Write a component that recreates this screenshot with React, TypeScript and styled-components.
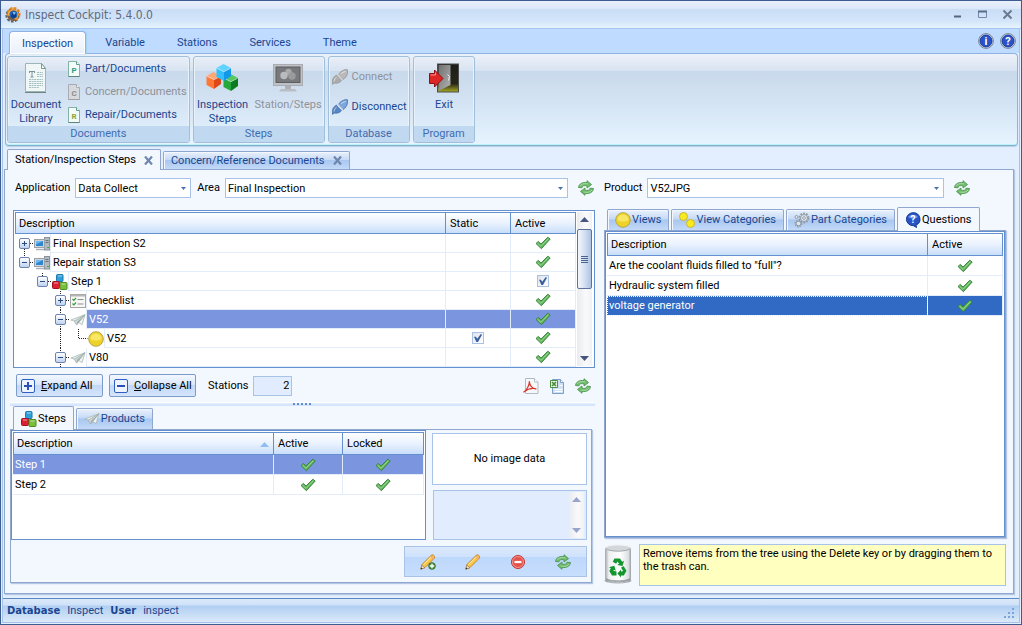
import React from 'react';
import styled, { createGlobalStyle, css } from 'styled-components';

const line = '#6490cf';
const softLine = '#a8c2e8';
const navy = '#1a4690';
const pageBg = '#f3f7fe';

const GlobalStyle = createGlobalStyle`
  * { box-sizing: border-box; }
  body { margin: 0; font: 11px/14px Roboto, "Liberation Sans", sans-serif; color: #000; }
  button, input, select, textarea { font: inherit; color: inherit; margin: 0; }
  button { border: 0; padding: 0; background: none; }
  svg { display: block; flex: none; }
`;

/* ---------- icons ---------- */

const AppIcon = () => (
  <svg width="16" height="16" viewBox="0 0 16 16">
    <circle cx="7.500" cy="8.500" r="5.800" fill="none" stroke="#5d6470" strokeWidth="2.600" strokeDasharray="2.600 1.300" />
    <circle cx="8.500" cy="7" r="5.600" fill="none" stroke="#e2851e" strokeWidth="2.800" strokeDasharray="2.600 1.100" />
    <circle cx="8" cy="7.600" r="5.400" fill="#f7a536" />
    <path d="M2.200 8.500a6 6 0 0 0 8 5l-1-2.500-4-2z" fill="#7d6047" />
    <circle cx="8.500" cy="7.500" r="3.900" fill="#1d62b8" />
    <path d="M8 4 11 6v4l-3 1.500L6 9.500z" fill="#0c3f8a" />
    <path d="M7.500 4.500l3.500 1.200L9 8z" fill="#8fc8ff" />
  </svg>
);

const RefreshIcon = () => (
  <svg width="16" height="16" viewBox="0 0 16 16">
    <g fill="#74bd6f" stroke="#3f8f45" strokeWidth=".8" strokeLinejoin="round">
      <path d="M.5 7.500C.8 4 4.500 1.800 9 2.600V.7L13.500 4.600 9 8V5.800C6 5.200 4.200 6 4 7.800z" />
      <path d="M15.500 8.500C15.200 12 11.500 14.200 7 13.400v1.900L2.500 11.400 7 8v2.200c3 .6 4.800-.2 5-2z" />
    </g>
    <path d="M2 6C3.500 3.800 6 3.200 9.800 3.800M14 10c-1.500 2.200-4 2.800-7.800 2.200" fill="none" stroke="#b4e0ae" strokeWidth=".8" />
  </svg>
);

const CheckIcon = () => (
  <svg width="16" height="14" viewBox="0 0 16 14">
    <path d="M1 7.500 3.300 5.400 6 8 12.800 1.200 15.200 3 6.400 12.700z" fill="#5fb25b" stroke="#348239" strokeWidth=".9" strokeLinejoin="round" />
    <path d="M2.500 7.200 6 10.400 13.500 2.600" fill="none" stroke="#9bdc92" strokeWidth="1" />
  </svg>
);

const DocumentIcon = () => (
  <svg width="24" height="32" viewBox="0 0 24 32">
    <path d="M1.500 1.500h16l4 5v23h-20z" fill="#f1f7f6" stroke="#9db5b4" />
    <path d="M17.500 1.500v5h4z" fill="#fff" stroke="#6f9f93" />
    <path d="M1 30.500h21" stroke="#6f8584" />
    <path d="M5 9.500h6M8 10v5M6.500 15h3M5.500 9v2M10.500 9v2" stroke="#73949a" fill="none" />
    <path d="M13 10.500h6M13 12.500h6M13 14.500h6M5 17.500h14M5 19.500h14M5 21.500h14M5 23.500h14M5 25.500h10" stroke="#a3bfc2" strokeDasharray="2 .6" />
  </svg>
);

const LetterPage = ({ letter, tone, off }: { letter: string; tone: string; off?: boolean }) => (
  <svg width="14" height="16" viewBox="0 0 14 16">
    <path d="M1.500.5h8l3 3v12h-11z" fill={off ? '#d6d9de' : '#f3faf7'} stroke={off ? '#a9abb0' : '#83b3a4'} />
    <path d="M9.500.5v3h3" fill="#fff" stroke={off ? '#a9abb0' : '#5f9a90'} />
    <path d="M1.500 15.500h11" stroke={off ? '#a0a0a0' : '#5c877d'} />
    <text x="7" y="12" fontSize="8" fontWeight="700" textAnchor="middle" fill={tone} fontFamily="Roboto, sans-serif">{letter}</text>
  </svg>
);

const Cube = ({ x, y, top, left, right }: { x: number; y: number; top: string; left: string; right: string }) => (
  <g transform={`translate(${x} ${y})`}>
    <path d="M7.500 0 15 4 8 7.500.5 4z" fill={top} />
    <path d="M.5 4 8 7.500V17L.5 13z" fill={left} />
    <path d="M15 4 8 7.500V17l7-5z" fill={right} />
    <path d="M1 4.300 8 7.700 14.500 4.300" stroke="#fff" strokeOpacity=".5" fill="none" />
  </g>
);

const CubesIcon = () => (
  <svg width="33" height="28" viewBox="0 0 33 28">
    <Cube x={0} y={8} top="#ffa877" left="#ff7838" right="#dd4a18" />
    <Cube x={17} y={10} top="#55c860" left="#27a83c" right="#0c7a1e" />
    <Cube x={10} y={0} top="#5fd3ff" left="#35c0fb" right="#1499ea" />
  </svg>
);

const MonitorIcon = () => (
  <svg width="32" height="30" viewBox="0 0 32 30">
    <rect x="1.500" y="1.500" width="29" height="21" fill="#bec1c6" stroke="#a9acb1" />
    <rect x="4" y="4" width="24" height="15.500" fill="#77797c" stroke="#5a5c60" />
    <circle cx="16.500" cy="9" r="3.200" fill="#a8aaac" />
    <circle cx="12" cy="12.500" r="3.700" fill="#b9bbbd" />
    <circle cx="20" cy="13" r="3.700" fill="#999b9d" />
    <path d="M13 23h6v3h-6z" fill="#adb0b5" />
    <path d="M9 26h14l2 2.500H7z" fill="#b9bcc1" />
  </svg>
);

const PlugIcon = ({ off }: { off?: boolean }) => (
  <svg width="16" height="16" viewBox="0 0 16 16">
    <g stroke={off ? '#949494' : '#4a6fa5'} strokeWidth=".8" strokeLinejoin="round">
      <path d="M13.500.6 15.600.8C16 5 14.500 8.500 11 10.500L6.500 5.500C8 2.500 10.500 1.600 13.500.6z" fill={off ? '#b9b9b9' : '#7ba6de'} />
      <path d="M.4 15.400C0 11 1 8 4.500 6l5.200 5.300C8 14 5 14.500 2.500 14z" fill={off ? '#acacac' : '#5585c6'} />
    </g>
    <path d="M5.500 5.700 10.500 10.900" stroke={off ? '#cfcfcf' : '#d9dde3'} strokeWidth="1.800" />
    <path d="M9 5c1-1.500 2.500-2 4.500-2.500M2 12.500c.3-2 1-3 2.500-4.500" stroke="#fff" strokeOpacity=".6" fill="none" />
  </svg>
);

const ExitIcon = () => (
  <svg width="32" height="30" viewBox="0 0 32 30">
    <defs>
      <linearGradient id="room" x1="0" y1="0" x2="0" y2="1">
        <stop offset="0" stopColor="#1c1c1c" /><stop offset=".7" stopColor="#262618" /><stop offset="1" stopColor="#a6aa20" />
      </linearGradient>
      <linearGradient id="leaf" x1="0" y1="0" x2="1" y2="1">
        <stop offset="0" stopColor="#6f6f6f" /><stop offset="1" stopColor="#b4b4b4" />
      </linearGradient>
    </defs>
    <rect x="9.500" y="1" width="21" height="28" fill="url(#room)" stroke="#4d4d4d" />
    <path d="M10.500 2h12v20l-12 6z" fill="url(#leaf)" />
    <path d="M19.500 11.500l2 2-1 4" stroke="#eee" fill="none" />
    <path d="M1.500 10.500H6.500V7L15 15.500 6.500 24v-3.500H1.500z" fill="#dd2626" stroke="#8d1010" />
    <path d="M2.500 12h5V9.500" stroke="#ff8f8f" fill="none" />
  </svg>
);

const BadgeIcon = ({ mark }: { mark: string }) => (
  <svg width="16" height="16" viewBox="0 0 16 16">
    <circle cx="8" cy="8" r="7.400" fill="#e8ebf2" stroke="#75808f" />
    <circle cx="8" cy="8" r="6" fill="#2b53c8" stroke="#163a9a" />
    <text x="8" y="12" fontSize="11" fontWeight="700" textAnchor="middle" fill="#fff" fontFamily="Roboto, sans-serif">{mark}</text>
  </svg>
);

const ComputerIcon = () => (
  <svg width="16" height="14" viewBox="0 0 16 14">
    <rect x="10.500" y=".5" width="5" height="12.500" fill="#b4b9bf" stroke="#8b929a" />
    <path d="M11.500 3.500h3M11.500 5.500h3" stroke="#6b737b" />
    <path d="M13 10.500h2" stroke="#3fae3f" />
    <rect x=".5" y="2.500" width="10" height="8" fill="#cfd5dc" stroke="#9aa1a9" />
    <rect x="2" y="4" width="7" height="5" fill="#2d86cf" />
    <path d="M2 4h7L2 7.500z" fill="#6fb8ee" />
    <path d="M2 12.500h8" stroke="#a9b0b8" strokeWidth="1.500" />
  </svg>
);

const BlocksIcon = () => (
  <svg width="16" height="16" viewBox="0 0 16 16">
    <rect x="4.500" y=".5" width="6.500" height="7" rx="1" fill="#2d9fd8" stroke="#1d77b0" />
    <rect x=".5" y="7.500" width="7" height="7" rx="1" fill="#dc1f33" stroke="#a30f20" />
    <rect x="8" y="8.500" width="7" height="7" rx="1" fill="#79bf3c" stroke="#4e8f1f" />
    <path d="M6 2h4M2 9h4M9.500 10h4" stroke="#fff" strokeOpacity=".55" />
  </svg>
);

const ChecklistIcon = () => (
  <svg width="16" height="14" viewBox="0 0 16 14">
    <rect x=".5" y=".5" width="15" height="13" fill="#f7f8f6" stroke="#a5a5a5" />
    <path d="M1 1.500h14" stroke="#b5b5b5" strokeWidth="2" />
    <path d="M2.500 5 3.800 6.300 6 4M2.500 9.500 3.800 10.800 6 8.500" stroke="#2f9a35" fill="none" strokeWidth="1.200" />
    <path d="M7.500 5.500h6M7.500 10h6" stroke="#8f8f8f" />
  </svg>
);

const PlaneIcon = () => (
  <svg width="16" height="12" viewBox="0 0 17 13">
    <path d="M.8 6.500 16 .8 13 11.500 8.500 8.800z" fill="#eef3f2" stroke="#a3b3b1" strokeWidth=".8" strokeLinejoin="round" />
    <path d="M4.500 7.800 16 .8 7 12z" fill="#d0dad8" stroke="#98a9a7" strokeWidth=".8" strokeLinejoin="round" />
    <path d="M7.500 8.500 16 .8 9 9.500 7 12z" fill="#9fb0ae" />
  </svg>
);

const YellowDot = () => (
  <svg width="16" height="16" viewBox="0 0 16 16">
    <circle cx="8" cy="8" r="7.300" fill="#edd22a" stroke="#b9a54a" />
    <path d="M2.500 8a5.500 5.500 0 0 1 11 0c-3 2-8 2-11 0z" fill="#f7e765" />
  </svg>
);

const TwoDots = () => (
  <svg width="16" height="16" viewBox="0 0 16 16">
    <circle cx="4.500" cy="4.500" r="4" fill="#f8ea1c" stroke="#c9b53a" />
    <circle cx="11.500" cy="11.500" r="4" fill="#f8ea1c" stroke="#c9b53a" />
  </svg>
);

const GearsIcon = () => (
  <svg width="16" height="16" viewBox="0 0 16 16">
    <g fill="none" stroke="#8f9ba6">
      <circle cx="10" cy="6" r="4.600" strokeWidth="1.800" strokeDasharray="1.800 1.100" />
      <circle cx="10" cy="6" r="3.500" fill="#dfe6ec" />
      <circle cx="10" cy="6" r="1.300" fill="#fff" />
      <circle cx="4.500" cy="11.500" r="3.300" strokeWidth="1.500" strokeDasharray="1.500 1" />
      <circle cx="4.500" cy="11.500" r="2.300" fill="#dfe6ec" />
      <circle cx="2.500" cy="5" r="1.500" fill="#dfe6ec" />
    </g>
  </svg>
);

const QuestionIcon = () => (
  <svg width="16" height="16" viewBox="0 0 16 16">
    <path d="M8 .7a6.800 6.500 0 0 1 3 12.400L11.500 15.500 8.500 13.700A6.800 6.500 0 0 1 8 .7z" fill="#2753c4" stroke="#143a97" />
    <path d="M3 5a6 5 0 0 1 10 0c-3 2-7 2-10 0z" fill="#6f95ec" />
    <text x="8" y="11" fontSize="10" fontWeight="700" textAnchor="middle" fill="#fff" fontFamily="Roboto, sans-serif">?</text>
  </svg>
);

const PdfIcon = () => (
  <svg width="16" height="16" viewBox="0 0 16 16">
    <path d="M2.500.5h9l3.500 3.500v11.500H2.500z" fill="#f6f7f9" stroke="#b3bac4" />
    <path d="M11.500.5V4H15" fill="#fff" stroke="#b3bac4" />
    <path d="M.8 14C4 12 6.500 7 6.300 3.500 6.800 8 9.500 10.500 13 10.800 8.500 9.800 4 11.500.8 14z" fill="none" stroke="#d8362c" strokeWidth="1.200" strokeLinejoin="round" />
  </svg>
);

const ExcelIcon = () => (
  <svg width="16" height="16" viewBox="0 0 16 16">
    <path d="M3.500 1.500h8l3 3v11h-11z" fill="#cfe1f5" stroke="#7d9fc6" />
    <path d="M11.500 1.500v3h3" fill="#fff" stroke="#7d9fc6" />
    <path d="M10.500 7.500h3M5.500 11.500h8M5.500 13.500h8" stroke="#fff" />
    <path d="M1.500 2.500h7v7h-7z" fill="#eef7e9" stroke="#4c9340" />
    <path d="M3 4 7 8M7 4 3 8" stroke="#3f8a34" strokeWidth="1.500" />
  </svg>
);

const PencilIcon = ({ plus }: { plus?: boolean }) => (
  <svg width="16" height="16" viewBox="0 0 16 16">
    <path d="M1 15 2 10.500 11.500 1c1.500-.8 3.800 1.200 3 3L5 13.500z" fill="#fbc64a" stroke="#c27f1c" strokeWidth=".9" strokeLinejoin="round" />
    <path d="M3.500 10.500 12 2.200" stroke="#fff0a8" />
    <path d="M10.500 2 14 5.200" stroke="#e8a58a" strokeWidth="1.500" />
    <path d="M.7 15.300 1.800 11 5 13.800z" fill="#f3dcc0" stroke="#8a6a45" strokeWidth=".6" />
    <path d="M.7 15.300 1.200 13.500 2.600 14.700z" fill="#3a2a1a" />
    {plus && (
      <>
        <circle cx="12" cy="12" r="3.300" fill="#55984a" stroke="#33702b" />
        <path d="M12 9.800v4.400M9.800 12h4.400" stroke="#fff" strokeWidth="1.300" />
      </>
    )}
  </svg>
);

const RemoveIcon = () => (
  <svg width="16" height="16" viewBox="0 0 16 16">
    <circle cx="8" cy="8" r="6.500" fill="#e4544c" stroke="#c2362f" />
    <circle cx="8" cy="8" r="5.500" fill="none" stroke="#f3958e" />
    <path d="M4.500 8h7" stroke="#fff" strokeWidth="2.200" />
  </svg>
);

const TrashIcon = () => (
  <svg width="28" height="40" viewBox="0 0 28 40">
    <defs>
      <linearGradient id="can" x1="0" x2="1">
        <stop offset="0" stopColor="#a2a6aa" /><stop offset=".15" stopColor="#eef0f2" /><stop offset=".6" stopColor="#fff" /><stop offset=".9" stopColor="#dcdfe2" /><stop offset="1" stopColor="#999da1" />
      </linearGradient>
    </defs>
    <ellipse cx="14" cy="36.500" rx="13.500" ry="3" fill="#a7adb5" />
    <path d="M1 4v31c2 4.500 24 4.500 26 0V4z" fill="url(#can)" />
    <path d="M2 34c3 3 21 3 24 0v2c-3 3-21 3-24 0z" fill="#6f7478" opacity=".6" />
    <ellipse cx="14" cy="4" rx="13" ry="3" fill="#d3d7db" stroke="#f0f2f4" />
    <path d="M1.500 4.500c4 3.500 21 3.500 25 0" fill="none" stroke="#84888c" strokeWidth=".8" />
    <g fill="#14962f">
      <path d="M10.500 14.500h5.500l2.200 3.300 1.900-1.100-1.600 5.300-5.300-1 1.900-1.200-1.600-2.400-1.400 2.300-3.400-2z" />
      <path d="M19.500 22 22.500 26.800 19.800 31.500H17v2l-3.600-4 3.600-4v2h1.300l.6-1.100-1.900-2.700z" />
      <path d="M12.500 27.500v4H8L5.300 27l1.500-2.700-1.800-1 5.300-1.500 1.500 5-1.900-1-.6 1z" />
    </g>
  </svg>
);

const CloseMark = () => (
  <svg width="9" height="9" viewBox="0 0 9 9">
    <path d="M1 .5 8 8.500M8 .5 1 8.500" stroke="#6f86ae" strokeWidth="2.200" />
  </svg>
);

const Arrow = ({ up, tone }: { up?: boolean; tone: string }) => (
  <svg width="9" height="5" viewBox="0 0 9 5"><path d={up ? 'M0 5h9L4.500 0z' : 'M0 0h9L4.500 5z'} fill={tone} /></svg>
);

/* ---------- window ---------- */

const Window = styled.div`
  min-height: 100vh;
  display: flex;
  flex-direction: column;
  background: #e3efff;
  border: 1px solid #3d5c90;
`;

const TitleBar = styled.header`
  display: flex;
  align-items: center;
  gap: 4px;
  height: 28px;
  padding: 0 8px 0 4px;
  border-bottom: 1px solid #a5c5ee;
  background: linear-gradient(#e9f0fc 0, #dbe7f8 8px, #c9ddf6 8px, #d3e5f9 20px, #e6f4fd 27px);
  color: #5f6b7e;
  font: 12px/14px "DejaVu Sans Condensed", "DejaVu Sans", sans-serif;
  h1 { flex: 1; margin: 0; font: inherit; }
`;

const WindowButtons = styled.div`
  display: flex;
  gap: 14px;
`;

const Body = styled.div`
  flex: 1;
  display: flex;
  flex-direction: column;
  margin: 0 1px 1px;
  border: 1px solid #a5c2ea;
  border-top: 0;
`;

/* ---------- ribbon ---------- */

const RibbonTabs = styled.nav`
  display: flex;
  align-items: flex-end;
  gap: 6px;
  height: 24px;
  padding: 0 3px 0 6px;
  background: #bfdbff;
`;

const RibbonTab = styled.button<{ $active?: boolean }>`
  height: 23px;
  padding: 2px 12px 0;
  color: ${navy};
  border: 1px solid transparent;
  ${p => p.$active && css`
    position: relative;
    margin-bottom: -1px;
    border-color: #8db2e3;
    border-bottom: 0;
    border-radius: 4px 4px 0 0;
    background: linear-gradient(#fafcff, #eaf1fb);
    box-shadow: inset 0 0 0 1px #fff, 1px 0 2px #9fd3f0;
  `}
`;

const RibbonHelp = styled.div`
  display: flex;
  gap: 6px;
  margin-left: auto;
  align-self: center;
`;

const Ribbon = styled.section`
  display: flex;
  gap: 3px;
  margin: 0 1px 0 2px;
  padding: 2px 1px;
  height: 93px;
  border: 1px solid #8db2e3;
  border-bottom-color: #7fb0cc;
  border-radius: 4px;
  background: linear-gradient(#edf1f9 0, #d8e3f1 17px, #c8d9eb 17px, #d5e4f4 50px, #e6f4ff 90px);
  box-shadow: 0 1px 1px #b9cfe6, inset 0 -1px 0 #bff0f8;
`;

const Group = styled.div`
  display: flex;
  flex-direction: column;
  height: 87px;
  border: 1px solid #9fbfdb;
  border-radius: 3px;
  overflow: hidden;
  box-shadow: inset 0 0 0 1px #e9f1fa;
`;

const GroupBody = styled.div`
  flex: 1;
  display: flex;
  gap: 6px;
  padding: 4px 2px 0 3px;
`;

const GroupTitle = styled.h2`
  margin: 0;
  height: 16px;
  text-align: center;
  font-size: 11px;
  font-weight: 400;
  line-height: 16px;
  color: #3f6cb0;
  background: #c1d9f0;
`;

const BigButton = styled.button<{ $w: number }>`
  display: flex;
  flex-direction: column;
  align-items: center;
  align-self: flex-start;
  gap: 3px;
  width: ${p => p.$w}px;
  color: ${navy};
  &:disabled { color: #8e9299; }
`;

const BigIcon = styled.span`
  display: flex;
  align-items: center;
  height: 34px;
`;

const SmallColumn = styled.div<{ $gap: number; $top?: number }>`
  display: flex;
  flex-direction: column;
  gap: ${p => p.$gap}px;
  padding-top: ${p => p.$top || 0}px;
`;

const SmallButton = styled.button`
  display: flex;
  align-items: center;
  gap: 4px;
  height: 16px;
  color: ${navy};
  white-space: nowrap;
  &:disabled { color: #8e9299; }
`;

/* ---------- tabs ---------- */

const TabRow = styled.div<{ $inset: number; $top: number }>`
  display: flex;
  align-items: flex-end;
  gap: 2px;
  padding-left: ${p => p.$inset}px;
  margin-top: ${p => p.$top}px;
`;

const Tab = styled.button<{ $active?: boolean; $h: number }>`
  display: flex;
  align-items: center;
  gap: 1px;
  height: ${p => p.$h}px;
  padding: 0 7px;
  white-space: nowrap;
  border: 1px solid #8fa6cf;
  border-bottom: 0;
  border-radius: 2px 2px 0 0;
  color: ${navy};
  background: linear-gradient(#e9f1fc, #c6daf6 45%, #a9c7f0 50%, #c3d9f8);
  box-shadow: inset 1px 1px 0 #f4f8fe;
  ${p => p.$active && css`
    position: relative;
    margin-bottom: -1px;
    color: #000;
    background: ${pageBg};
  `}
`;

const TabClose = styled.span`
  margin-left: 7px;
`;

/* ---------- page ---------- */

const Page = styled.main`
  flex: 1;
  display: grid;
  grid-template-columns: minmax(0, 590fr) minmax(0, 402fr);
  column-gap: 9px;
  margin: 0 5px 4px 1px;
  padding: 8px 7px 7px 0;
  border: 1px solid #8ea8cf;
  background: ${pageBg};
  box-shadow: 1px 1px 1px #b4c8e6;
`;

const Pane = styled.section`
  display: flex;
  flex-direction: column;
  min-width: 0;
`;

const Filters = styled.div<{ $left?: number; $right?: number }>`
  display: flex;
  align-items: center;
  gap: 6px;
  padding: 0 ${p => p.$right || 0}px 0 ${p => p.$left || 0}px;
  > button { margin-left: 4px; }
`;

const Field = styled.label<{ $grow?: boolean }>`
  display: flex;
  align-items: center;
  gap: 5px;
  ${p => p.$grow && 'flex: 1;'}
`;

const SelectBox = styled.span<{ $w?: number }>`
  position: relative;
  ${p => (p.$w ? `width: ${p.$w}px;` : 'flex: 1;')}
  svg { position: absolute; right: 5px; top: 9px; pointer-events: none; }
`;

const Select = styled.select`
  display: block;
  appearance: none;
  width: 100%;
  height: 20px;
  padding: 1px 14px 0 2px;
  border: 1px solid ${softLine};
  border-radius: 0;
  background: #fff;
`;

const IconButton = styled.button`
  display: flex;
`;

const GridFrame = styled.div<{ $top?: number; $left?: number; $h?: number }>`
  display: flex;
  align-items: flex-start;
  min-height: 0;
  margin: ${p => p.$top || 0}px 0 0 ${p => p.$left || 0}px;
  ${p => (p.$h ? `height: ${p.$h}px;` : 'flex: 1;')}
  padding: 1px;
  border: 1px solid ${line};
  background: #fff;
  overflow: hidden;
`;

const Table = styled.table<{ $row: number; $head: number }>`
  flex: 1;
  min-width: 0;
  width: 100%;
  table-layout: fixed;
  border-spacing: 0;
  th {
    height: ${p => p.$head}px;
    padding: 1px 4px 0;
    text-align: left;
    font-weight: 400;
    border: solid ${line};
    border-width: 1px 1px 1px 0;
    background: linear-gradient(#fdfeff, #eaf2fe 50%, #c9defb);
  }
  th:first-child { border-left-width: 1px; padding-left: 3px; }
  td {
    height: ${p => p.$row}px;
    padding: 0 2px;
    border: solid #e3ecfa;
    border-width: 0 1px 1px 0;
  }
  td svg, td input { margin: 0 auto; }
`;

const Row = styled.tr<{ $tone?: string }>`
  ${p => p.$tone && css`td { background: ${p.$tone}; color: #fff; }`}
`;

const FocusCell = styled.td`
  outline: 1px dotted #fff;
  outline-offset: -1px;
`;

const HeadLabel = styled.span`
  display: flex;
  align-items: center;
  justify-content: space-between;
`;

const CheckBox = styled.input`
  display: block;
  appearance: none;
  width: 12px;
  height: 12px;
  border: 1px solid #a9c1e6;
  background: linear-gradient(135deg, #dfe3ea, #fff);
  &:checked::after {
    content: '';
    display: block;
    width: 8px;
    height: 8px;
    margin: 1px;
    background: #3a5f9e;
    clip-path: polygon(0 35%, 25% 35%, 40% 60%, 85% 0, 100% 10%, 50% 100%, 30% 100%);
  }
`;

/* ---------- tree ---------- */

const TreeTable = styled(Table)`
  tbody td:first-child { padding: 0; border-bottom: 0; background: #fff; }
`;

const TreeCell = styled.div<{ $level: number }>`
  position: relative;
  display: flex;
  align-items: center;
  height: 19px;
  padding-left: ${p => 4 + p.$level * 18}px;
`;

const TreeLines = styled.svg`
  position: absolute;
  left: 0;
  top: 0;
`;

const Expander = styled.button`
  position: relative;
  width: 11px;
  height: 11px;
  margin-right: 3px;
  border: 1px solid #6d83ad;
  border-radius: 2px;
  background: linear-gradient(#fff, #bed2f2);
  &::before, &.closed::after {
    content: '';
    position: absolute;
    left: 2px;
    top: 4px;
    width: 5px;
    height: 1px;
    background: #2b4a7d;
  }
  &.closed::after { transform: rotate(90deg); }
`;

const TreeIcon = styled.span<{ $leaf?: boolean }>`
  display: flex;
  justify-content: center;
  width: 17px;
  margin-left: ${p => (p.$leaf ? 14 : 0)}px;
`;

const TreeLabel = styled.span<{ $selected?: boolean }>`
  flex: 1;
  height: 19px;
  line-height: 20px;
  padding-left: 2px;
  border-left: 1px solid #e3ecfa;
  border-bottom: 1px solid #e3ecfa;
  ${p => p.$selected && 'background: #7b96df; color: #fff;'}
`;

/* ---------- scroll bar ---------- */

const ScrollBar = styled.div<{ $pad: number }>`
  align-self: stretch;
  display: flex;
  flex-direction: column;
  align-items: center;
  justify-content: space-between;
  width: 15px;
  margin: 0 1px;
  background: linear-gradient(90deg, #e9ebef, #fafafb 60%, #f0f1f4);
  padding: ${p => p.$pad}px 0;
  button { display: flex; }
`;

const Thumb = styled.div`
  width: 15px;
  height: 60px;
  margin: 7px 0 auto;
  padding: 26px 3px;
  border: 1px solid #5d719b;
  border-radius: 2px;
  background: linear-gradient(90deg, #f4f8fd, #d3e0f2 50%, #adc2e0);
  i { display: block; height: 1px; margin-bottom: 1px; background: #4d6190; }
`;

/* ---------- left pane parts ---------- */

const ActionRow = styled.div`
  display: flex;
  align-items: center;
  gap: 6px;
  height: 23px;
  margin: 6px 4px 0 11px;
`;

const PushButton = styled.button`
  display: flex;
  align-items: center;
  gap: 6px;
  width: 87px;
  height: 23px;
  padding: 0 4px;
  border: 1px solid #7d9bc9;
  border-radius: 2px;
  background: linear-gradient(#f3f8ff, #dbe8fb 45%, #c2d8f7 50%, #d5e5fc);
  white-space: nowrap;
`;

const SignBox = styled.span`
  display: flex;
  border: 1px solid #2f5fc4;
  border-radius: 2px;
  background: #eef4ff;
`;

const CountField = styled.label`
  display: flex;
  align-items: center;
  gap: 5px;
  margin-left: 6px;
  input {
    width: 39px;
    height: 20px;
    padding: 0 2px;
    text-align: right;
    border: 1px solid ${softLine};
    background: #e1edfe;
  }
`;

const ExportTools = styled.div`
  display: flex;
  gap: 10px;
  margin-left: auto;
`;

const Splitter = styled.div`
  display: flex;
  justify-content: center;
  align-items: center;
  height: 4px;
  margin: 5px 0 0 5px;
  background: linear-gradient(#fff 0, #fff 1px, #e3efff 1px, #cfe2fc 4px);
`;

const TabPanel = styled.div<{ $left?: number; $right?: number; $bottom?: number }>`
  flex: 1;
  display: flex;
  margin: 0 ${p => p.$right || 0}px ${p => p.$bottom || 0}px ${p => p.$left || 0}px;
  border: 1px solid #8fa6cf;
  box-shadow: 1px 1px 1px #b4c8e6;
`;

const StepsLayout = styled.div`
  flex: 1;
  display: grid;
  grid-template-columns: minmax(0, 1fr) 155px;
  grid-template-rows: minmax(0, 1fr) 31px;
  gap: 6px;
  padding: 0 4px 5px 0;
`;

const SideColumn = styled.div`
  display: flex;
  flex-direction: column;
  gap: 5px;
  padding-top: 3px;
`;

const ImageBox = styled.div`
  display: flex;
  align-items: center;
  justify-content: center;
  height: 52px;
  border: 1px solid ${softLine};
  background: #fff;
`;

const Memo = styled.div`
  flex: 1;
  display: flex;
  margin-left: 1px;
  padding: 1px;
  border: 1px solid ${softLine};
  background: #e1edfe;
  textarea { flex: 1; min-width: 0; height: 0; min-height: 100%; resize: none; border: 0; padding: 2px; background: transparent; overflow: hidden; }
`;

const EditBar = styled.div`
  grid-column: 1 / -1;
  justify-self: end;
  display: flex;
  align-items: center;
  justify-content: space-between;
  width: 183px;
  padding: 0 15px;
  border: 1px solid ${softLine};
  background: linear-gradient(#dce9fc, #cfe2fd 33%, #bdd8fc 36%, #c8defd);
`;

const Hint = styled.div`
  display: flex;
  align-items: flex-start;
  gap: 7px;
  margin: 6px 0 0;
  p {
    flex: 1;
    margin: 0;
    height: 42px;
    padding: 2px 3px;
    line-height: 13px;
    border: 1px solid ${softLine};
    background: #ffffbf;
  }
`;

const StatusBar = styled.footer`
  display: flex;
  align-items: center;
  gap: 7px;
  height: 24px;
  padding: 1px 2px 0 4px;
  border-top: 1px solid #5b8ac2;
  color: ${navy};
  background: linear-gradient(#dbeafb 0, #cfe2f8 6px, #b0cff3 7px, #c3daf5 14px, #dce9f9 23px);
  strong { font-family: "DejaVu Sans", sans-serif; font-size: 10px; }
`;

const Grip = styled.svg`
  margin: 4px 2px 0 auto;
`;

/* ---------- data ---------- */

type TreeNode = {
  label: string;
  level: number;
  icon: React.ReactNode;
  state?: 'open' | 'closed';
  lines: string;
  fixed?: boolean;
  box?: boolean;
  selected?: boolean;
};

const tree: TreeNode[] = [
  { label: 'Final Inspection S2', level: 0, icon: <ComputerIcon />, state: 'closed', lines: 'M9.500 15v4M15 9.500h4' },
  { label: 'Repair station S3', level: 0, icon: <ComputerIcon />, state: 'open', lines: 'M9.500 0v4M15 9.500h4' },
  { label: 'Step 1', level: 1, icon: <BlocksIcon />, state: 'open', lines: 'M27.500 1v4M33 9.500h4', box: true },
  { label: 'Checklist', level: 2, icon: <ChecklistIcon />, state: 'closed', lines: 'M45.500 0v19M51 9.500h4' },
  { label: 'V52', level: 2, icon: <PlaneIcon />, state: 'open', lines: 'M45.500 0v19M51 9.500h4', selected: true },
  { label: 'V52', level: 3, icon: <YellowDot />, lines: 'M45.500 0v19M63.500 0v9.500h9', fixed: true },
  { label: 'V80', level: 2, icon: <PlaneIcon />, state: 'open', lines: 'M45.500 0v19M51 9.500h4' },
];

const ribbonTabs = ['Inspection', 'Variable', 'Stations', 'Services', 'Theme'];
const questions = ['Are the coolant fluids filled to "full"?', 'Hydraulic system filled', 'voltage generator'];

const Dropdown = ({ value, w, label }: { value: string; w?: number; label: string }) => (
  <SelectBox $w={w}>
    <Select aria-label={label} defaultValue={value}><option>{value}</option></Select>
    <svg width="5" height="3" viewBox="0 0 5 3"><path d="M0 0h5L2.500 3z" fill="#4a72ad" /></svg>
  </SelectBox>
);

const Sign = ({ plus }: { plus?: boolean }) => (
  <SignBox>
    <svg width="12" height="12" viewBox="0 0 12 12">
      <path d={plus ? 'M2 6h8M6 2v8' : 'M2 6h8'} stroke="#2a50b8" strokeWidth="2" />
    </svg>
  </SignBox>
);

export default function App() {
  return (
    <Window>
      <GlobalStyle />
      <TitleBar>
        <AppIcon />
        <h1>Inspect Cockpit: 5.4.0.0</h1>
        <WindowButtons>
          <IconButton aria-label="Minimize"><svg width="11" height="11" viewBox="0 0 11 11"><path d="M2 7.500h7" stroke="#56657f" strokeWidth="2" /></svg></IconButton>
          <IconButton aria-label="Maximize"><svg width="11" height="11" viewBox="0 0 11 11"><path d="M1.500 2.500h8v6h-8z" fill="none" stroke="#7488a8" /><path d="M1 2.500h9" stroke="#5b6c8a" strokeWidth="2" /></svg></IconButton>
          <IconButton aria-label="Close"><svg width="11" height="11" viewBox="0 0 11 11"><path d="M1.500 1.500l8 8M9.500 1.500l-8 8" stroke="#6b7890" strokeWidth="2" /></svg></IconButton>
        </WindowButtons>
      </TitleBar>
      <Body>
        <RibbonTabs>
          {ribbonTabs.map((name, i) => <RibbonTab key={name} $active={i === 0}>{name}</RibbonTab>)}
          <RibbonHelp>
            <IconButton aria-label="About"><BadgeIcon mark="i" /></IconButton>
            <IconButton aria-label="Help"><BadgeIcon mark="?" /></IconButton>
          </RibbonHelp>
        </RibbonTabs>
        <Ribbon>
          <Group>
            <GroupBody>
              <BigButton $w={50}><BigIcon><DocumentIcon /></BigIcon>Document Library</BigButton>
              <SmallColumn $gap={7}>
                <SmallButton><LetterPage letter="P" tone="#1f9f86" />Part/Documents</SmallButton>
                <SmallButton disabled><LetterPage letter="C" tone="#8b8b8b" off />Concern/Documents</SmallButton>
                <SmallButton><LetterPage letter="R" tone="#8aa53a" />Repair/Documents</SmallButton>
              </SmallColumn>
            </GroupBody>
            <GroupTitle>Documents</GroupTitle>
          </Group>
          <Group>
            <GroupBody>
              <BigButton $w={52}><BigIcon><CubesIcon /></BigIcon>Inspection Steps</BigButton>
              <BigButton $w={67} disabled><BigIcon><MonitorIcon /></BigIcon>Station/Steps</BigButton>
            </GroupBody>
            <GroupTitle>Steps</GroupTitle>
          </Group>
          <Group>
            <GroupBody>
              <SmallColumn $gap={14} $top={8}>
                <SmallButton disabled><PlugIcon off />Connect</SmallButton>
                <SmallButton><PlugIcon />Disconnect</SmallButton>
              </SmallColumn>
            </GroupBody>
            <GroupTitle>Database</GroupTitle>
          </Group>
          <Group>
            <GroupBody>
              <BigButton $w={55}><BigIcon><ExitIcon /></BigIcon>Exit</BigButton>
            </GroupBody>
            <GroupTitle>Program</GroupTitle>
          </Group>
        </Ribbon>

        <TabRow $inset={4} $top={3}>
          <Tab $active $h={21}>Station/Inspection Steps<TabClose><CloseMark /></TabClose></Tab>
          <Tab $h={18}>Concern/Reference Documents<TabClose><CloseMark /></TabClose></Tab>
        </TabRow>

        <Page>
          <Pane>
            <Filters $left={10} $right={1}>
              <Field>Application <Dropdown label="Application" value="Data Collect" w={116} /></Field>
              <Field $grow>Area <Dropdown label="Area" value="Final Inspection" /></Field>
              <IconButton aria-label="Refresh"><RefreshIcon /></IconButton>
            </Filters>

            <GridFrame $top={12} $left={8} $h={158}>
              <TreeTable $row={19} $head={22}>
                <colgroup><col /><col width="65" /><col width="65" /></colgroup>
                <thead><tr><th>Description</th><th>Static</th><th>Active</th></tr></thead>
                <tbody>
                  {tree.map((n, i) => (
                    <Row key={i} $tone={n.selected ? '#7b96df' : undefined}>
                      <td>
                        <TreeCell $level={n.level}>
                          <TreeLines width="80" height="19"><path d={n.lines} fill="none" stroke="#222" strokeDasharray="1 1" /></TreeLines>
                          {n.state && <Expander className={n.state} aria-label={n.state === 'open' ? 'Collapse' : 'Expand'} />}
                          <TreeIcon $leaf={!n.state}>{n.icon}</TreeIcon>
                          <TreeLabel $selected={n.selected}>{n.label}</TreeLabel>
                        </TreeCell>
                      </td>
                      <td>{n.fixed && <CheckBox type="checkbox" defaultChecked aria-label="Static" />}</td>
                      <td>{n.box ? <CheckBox type="checkbox" defaultChecked aria-label="Active" /> : <CheckIcon />}</td>
                    </Row>
                  ))}
                </tbody>
              </TreeTable>
              <ScrollBar $pad={5}>
                <button aria-label="Scroll up"><Arrow up tone="#46557e" /></button>
                <Thumb><i /><i /><i /><i /></Thumb>
                <button aria-label="Scroll down"><Arrow tone="#46557e" /></button>
              </ScrollBar>
            </GridFrame>

            <ActionRow>
              <PushButton><Sign plus /><span><u>E</u>xpand All</span></PushButton>
              <PushButton><Sign /><span><u>C</u>ollapse All</span></PushButton>
              <CountField>Stations <input defaultValue="2" readOnly /></CountField>
              <ExportTools>
                <IconButton aria-label="Export to PDF"><PdfIcon /></IconButton>
                <IconButton aria-label="Export to Excel"><ExcelIcon /></IconButton>
                <IconButton aria-label="Refresh tree"><RefreshIcon /></IconButton>
              </ExportTools>
            </ActionRow>

            <Splitter>
              <svg width="19" height="3" viewBox="0 0 19 3"><path d="M0 1h19" stroke="#5f8fd0" strokeWidth="2" strokeDasharray="2 2" /></svg>
            </Splitter>

            <TabRow $inset={8} $top={0}>
              <Tab $active $h={24}><BlocksIcon />Steps</Tab>
              <Tab $h={21}><PlaneIcon />Products</Tab>
            </TabRow>
            <TabPanel $left={5} $right={3} $bottom={3}>
              <StepsLayout>
                <GridFrame>
                  <Table $row={20} $head={23}>
                    <colgroup><col /><col width="69" /><col width="81" /></colgroup>
                    <thead>
                      <tr><th><HeadLabel>Description<Arrow up tone="#8fbdf5" /></HeadLabel></th><th>Active</th><th>Locked</th></tr>
                    </thead>
                    <tbody>
                      <Row $tone="#7b96df"><td>Step 1</td><td><CheckIcon /></td><td><CheckIcon /></td></Row>
                      <Row><td>Step 2</td><td><CheckIcon /></td><td><CheckIcon /></td></Row>
                    </tbody>
                  </Table>
                </GridFrame>
                <SideColumn>
                  <ImageBox>No image data</ImageBox>
                  <Memo>
                    <textarea aria-label="Step notes" />
                    <ScrollBar $pad={5}>
                      <button aria-label="Scroll notes up"><Arrow up tone="#97a5cc" /></button>
                      <button aria-label="Scroll notes down"><Arrow tone="#97a5cc" /></button>
                    </ScrollBar>
                  </Memo>
                </SideColumn>
                <EditBar>
                  <IconButton aria-label="Add step"><PencilIcon plus /></IconButton>
                  <IconButton aria-label="Edit step"><PencilIcon /></IconButton>
                  <IconButton aria-label="Delete step"><RemoveIcon /></IconButton>
                  <IconButton aria-label="Refresh steps"><RefreshIcon /></IconButton>
                </EditBar>
              </StepsLayout>
            </TabPanel>
          </Pane>

          <Pane>
            <Filters $right={36}>
              <Field $grow>Product <Dropdown label="Product" value="V52JPG" /></Field>
              <IconButton aria-label="Refresh products"><RefreshIcon /></IconButton>
            </Filters>
            <TabRow $inset={3} $top={9}>
              <Tab $h={21}><YellowDot />Views</Tab>
              <Tab $h={21}><TwoDots />View Categories</Tab>
              <Tab $h={21}><GearsIcon />Part Categories</Tab>
              <Tab $active $h={24}><QuestionIcon />Questions</Tab>
            </TabRow>
            <TabPanel>
              <GridFrame>
                <Table $row={20} $head={23}>
                  <colgroup><col /><col width="75" /></colgroup>
                  <thead><tr><th>Description</th><th>Active</th></tr></thead>
                  <tbody>
                    {questions.map((q, i) => (
                      <Row key={q} $tone={i === 2 ? '#316ac5' : undefined}>
                        {i === 2 ? <FocusCell>{q}</FocusCell> : <td>{q}</td>}
                        <td><CheckIcon /></td>
                      </Row>
                    ))}
                  </tbody>
                </Table>
              </GridFrame>
            </TabPanel>
            <Hint>
              <TrashIcon />
              <p>Remove items from the tree using the Delete key or by dragging them to the trash can.</p>
            </Hint>
          </Pane>
        </Page>

        <StatusBar>
          <strong>Database</strong>Inspect
          <strong>User</strong>inspect
          <Grip width="12" height="12" viewBox="0 0 12 12">
            <path d="M9 1h2v2H9zM5 5h2v2H5zM9 5h2v2H9zM1 9h2v2H1zM5 9h2v2H5zM9 9h2v2H9z" fill="#7da3dc" />
          </Grip>
        </StatusBar>
      </Body>
    </Window>
  );
}
